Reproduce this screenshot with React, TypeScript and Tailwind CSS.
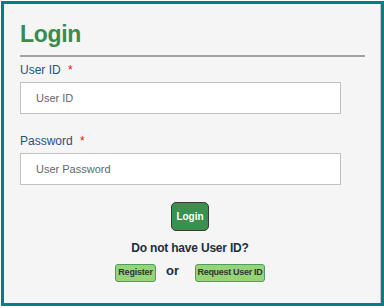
export default function App() {
  return (
    <div className="w-[384px] h-[308px] bg-white pt-px pl-px" style={{ fontFamily: '"Liberation Sans", Arial, sans-serif' }}>
      <div className="w-[383px] h-[305px] border-[3px] border-[#008080] bg-[#f5f5f5] shadow-[inset_-1px_0_0_#c4c4c4] px-4 pt-4">
        {/* Heading */}
        <h2 className="text-[23px] leading-[28px] font-bold text-[#3a8c4c] tracking-[-0.3px] pb-[7px] border-b-2 border-[#a3a3a3]">
          Login
        </h2>

        {/* User ID */}
        <label className="block mt-[5px] text-[12px] leading-[16px] text-[#2b4f7e]">
          User ID <span className="text-[#e11] ml-1">*</span>
        </label>
        <div className="mt-[4px] w-[321px] h-[32px] border border-[#c2c2c2] bg-white flex items-center pl-[15px] text-[11px] text-[#666]">
          User ID
        </div>

        {/* Password */}
        <label className="block mt-[19px] text-[12px] leading-[16px] text-[#2b4f7e]">
          Password <span className="text-[#e11] ml-1">*</span>
        </label>
        <div className="mt-[4px] w-[321px] h-[32px] border border-[#c2c2c2] bg-white flex items-center pl-[15px] text-[11px] text-[#666]">
          User Password
        </div>

        {/* Actions */}
        <div className="w-[340px] flex flex-col items-center">
          <button className="mt-[17px] w-[38px] h-[29px] rounded-[5px] bg-[#3b8f4f] border border-[#3a3a3a] text-[10px] font-bold text-[#fffff0]">
            Login
          </button>
          <p className="mt-[9px] text-[12px] leading-[16px] font-bold tracking-[-0.2px] text-[#1f2d3d]">
            Do not have User ID?
          </p>
          <div className="mt-[8px] flex items-start">
            <button className="w-[41px] h-[18px] rounded-[3px] bg-[#96d47a] border border-[#4f9f5c] text-[9px] font-bold tracking-[-0.2px] text-[#333] whitespace-nowrap">
              Register
            </button>
            <span className="ml-[10px] -mt-px text-[13px] leading-[16px] font-bold text-[#1f2d3d]">or</span>
            <button className="ml-[16px] w-[70px] h-[18px] rounded-[3px] bg-[#96d47a] border border-[#4f9f5c] text-[9px] font-bold tracking-[-0.3px] text-[#333] whitespace-nowrap">
              Request User ID
            </button>
          </div>
        </div>
      </div>
    </div>
  )
}
